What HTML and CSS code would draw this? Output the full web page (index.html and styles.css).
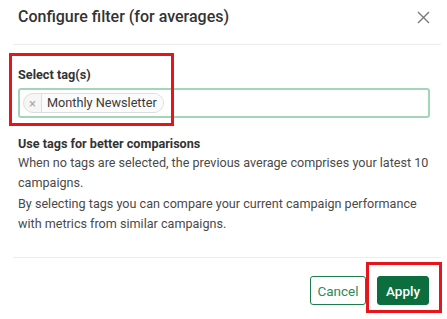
FILE: index.html
```html
<!DOCTYPE html>
<html lang="en">
<head>
<meta charset="utf-8">
<title>Configure filter</title>
<link rel="stylesheet" href="styles.css">
</head>
<body>
<div class="dialog">
  <header class="dlg-header">
    <h1 class="dlg-title">Configure filter (for averages)</h1>
    <button class="close" aria-label="Close">
      <svg width="13" height="13" viewBox="0 0 13 13"><path d="M1 1L12 12M12 1L1 12" stroke="#7a7a7a" stroke-width="1.4" fill="none"/></svg>
    </button>
  </header>
  <section class="dlg-body">
    <label class="field-label">Select tag(s)</label>
    <div class="tag-input">
      <span class="chip"><span class="chip-x">×</span><span class="chip-text">Monthly Newsletter</span></span>
    </div>
    <h2 class="hint-title">Use tags for better comparisons</h2>
    <p class="hint">When no tags are selected, the previous average comprises your latest 10 campaigns.</p>
    <p class="hint">By selecting tags you can compare your current campaign performance with metrics from similar campaigns.</p>
  </section>
  <footer class="dlg-footer">
    <button class="btn btn-outline">Cancel</button>
    <button class="btn btn-primary">Apply</button>
  </footer>
</div>
<div class="mark mark-tags"></div>
<div class="mark mark-apply"></div>
</body>
</html>
```
FILE: styles.css
```css
* { box-sizing: border-box; }
html, body { margin: 0; padding: 0; background: #fff; }
body {
  font-family: Roboto, "Liberation Sans", Arial, sans-serif;
  color: #333;
  width: 447px;
  height: 319px;
  position: relative;
  overflow: hidden;
}
.dialog {
  padding: 0 6px 0 13px;
}
.dlg-header {
  height: 45px;
  display: flex;
  align-items: flex-start;
  justify-content: space-between;
  padding: 7px 11px 0 5px;
  border-bottom: 1px solid #ececec;
}
.dlg-title {
  margin: 0;
  font-size: 16px;
  line-height: 20px;
  font-weight: 500;
  color: #333;
}
.close {
  border: 0;
  background: none;
  padding: 0;
  margin-top: 4px;
  width: 13px;
  height: 13px;
  display: flex;
}
.dlg-body {
  padding: 22px 11px 0 5px;
  height: 212px;
}
.field-label {
  display: block;
  font-size: 12.7px;
  line-height: 16px;
  font-weight: 700;
  color: #333;
}
.tag-input {
  margin-top: 5px;
  height: 30px;
  border: 2px solid #a3d5b8;
  border-radius: 3px;
  padding: 3px 3px;
  display: flex;
  align-items: center;
}
.chip {
  display: inline-flex;
  align-items: center;
  height: 20px;
  border: 1px solid #dedede;
  border-radius: 10px;
  background: #f6f6f6;
  overflow: hidden;
}
.chip-x {
  width: 18px;
  height: 100%;
  display: flex;
  align-items: center;
  justify-content: center;
  color: #a8a8a8;
  font-size: 13px;
  border-right: 1px solid #dedede;
}
.chip-text {
  padding: 0 6px 0 5px;
  font-size: 12.7px;
  color: #3a3a3a;
  line-height: 18px;
  background: #fbfbfb;
}
.hint-title {
  margin: 18px 0 0;
  font-size: 12.6px;
  line-height: 16px;
  font-weight: 700;
  color: #333;
}
.hint {
  margin: 1px -12px 0 0;
  font-size: 12.6px;
  line-height: 20px;
  color: #4a4a4a;
}
.hint + .hint { margin-top: 1px; }
.dlg-footer {
  border-top: 1px solid #ececec;
  display: flex;
  justify-content: flex-end;
  gap: 11px;
  padding: 18px 12px 0 5px;
}
.btn {
  height: 29px;
  border-radius: 3px;
  font-family: Roboto, "Liberation Sans", Arial, sans-serif;
  font-size: 13.5px;
  padding: 0 6px;
  cursor: pointer;
}
.btn-outline {
  background: #fff;
  border: 1px solid #1f7d4c;
  color: #2e8a58;
  width: 56px;
}
.btn-primary {
  background: #0c6e3e;
  border: 1px solid #0c6e3e;
  color: #fff;
  font-weight: 500;
  width: 52px;
}
.mark {
  position: absolute;
  border: 3px solid #e8141c;
  pointer-events: none;
}
.mark-tags { left: 9px; top: 53px; width: 165px; height: 73px; }
.mark-apply { left: 366px; top: 262px; width: 76px; height: 51px; }
```
